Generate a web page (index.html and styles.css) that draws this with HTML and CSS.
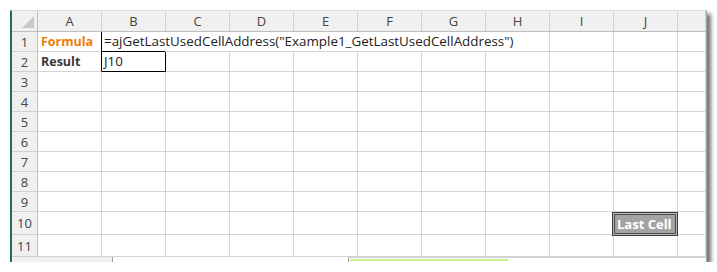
FILE: index.html
```html
<!DOCTYPE html>
<html lang="en">
<head>
    <meta charset="UTF-8">
    <title>GetLastUsedCellAddress</title>
    <link rel="stylesheet" href="styles.css">
</head>
<body>
    <div class="window">
        <div class="sheet">
            <!-- column headers -->
            <div class="corner"><span class="tri"></span></div>
            <div class="colhead">A</div>
            <div class="colhead">B</div>
            <div class="colhead">C</div>
            <div class="colhead">D</div>
            <div class="colhead">E</div>
            <div class="colhead">F</div>
            <div class="colhead">G</div>
            <div class="colhead">H</div>
            <div class="colhead">I</div>
            <div class="colhead">J</div>
            <div class="colhead"></div>

            <!-- row 1 -->
            <div class="rowhead">1</div>
            <div class="cell label orange black-right">Formula</div>
            <div class="cell formula">=ajGetLastUsedCellAddress("Example1_GetLastUsedCellAddress")</div>
            <div class="cell"></div>
            <div class="cell"></div>
            <div class="cell"></div>

            <!-- row 2 -->
            <div class="rowhead">2</div>
            <div class="cell label black-right">Result</div>
            <div class="cell boxed">J10</div>
            <div class="cell"></div><div class="cell"></div><div class="cell"></div>
            <div class="cell"></div><div class="cell"></div><div class="cell"></div>
            <div class="cell"></div><div class="cell"></div><div class="cell"></div>

            <div class="rowhead">3</div>
            <div class="cell"></div><div class="cell"></div><div class="cell"></div><div class="cell"></div><div class="cell"></div>
            <div class="cell"></div><div class="cell"></div><div class="cell"></div><div class="cell"></div><div class="cell"></div><div class="cell"></div>

            <div class="rowhead">4</div>
            <div class="cell"></div><div class="cell"></div><div class="cell"></div><div class="cell"></div><div class="cell"></div>
            <div class="cell"></div><div class="cell"></div><div class="cell"></div><div class="cell"></div><div class="cell"></div><div class="cell"></div>

            <div class="rowhead">5</div>
            <div class="cell"></div><div class="cell"></div><div class="cell"></div><div class="cell"></div><div class="cell"></div>
            <div class="cell"></div><div class="cell"></div><div class="cell"></div><div class="cell"></div><div class="cell"></div><div class="cell"></div>

            <div class="rowhead">6</div>
            <div class="cell"></div><div class="cell"></div><div class="cell"></div><div class="cell"></div><div class="cell"></div>
            <div class="cell"></div><div class="cell"></div><div class="cell"></div><div class="cell"></div><div class="cell"></div><div class="cell"></div>

            <div class="rowhead">7</div>
            <div class="cell"></div><div class="cell"></div><div class="cell"></div><div class="cell"></div><div class="cell"></div>
            <div class="cell"></div><div class="cell"></div><div class="cell"></div><div class="cell"></div><div class="cell"></div><div class="cell"></div>

            <div class="rowhead">8</div>
            <div class="cell"></div><div class="cell"></div><div class="cell"></div><div class="cell"></div><div class="cell"></div>
            <div class="cell"></div><div class="cell"></div><div class="cell"></div><div class="cell"></div><div class="cell"></div><div class="cell"></div>

            <div class="rowhead">9</div>
            <div class="cell"></div><div class="cell"></div><div class="cell"></div><div class="cell"></div><div class="cell"></div>
            <div class="cell"></div><div class="cell"></div><div class="cell"></div><div class="cell"></div><div class="cell"></div><div class="cell"></div>

            <div class="rowhead">10</div>
            <div class="cell"></div><div class="cell"></div><div class="cell"></div><div class="cell"></div><div class="cell"></div>
            <div class="cell"></div><div class="cell"></div><div class="cell"></div><div class="cell"></div><div class="cell"></div><div class="cell"></div>

            <div class="rowhead">11</div>
            <div class="cell"></div><div class="cell"></div><div class="cell"></div><div class="cell"></div><div class="cell"></div>
            <div class="cell"></div><div class="cell"></div><div class="cell"></div><div class="cell"></div><div class="cell"></div><div class="cell"></div>
        </div>

        <!-- sheet tabs / scroll bar strip -->
        <div class="tabbar">
            <div class="tabs"></div>
            <div class="tab-gap"></div>
            <div class="hscroll"><span class="thumb"></span></div>
        </div>

        <!-- shape button lying over J10 -->
        <div class="shape-btn">Last Cell</div>
    </div>
</body>
</html>
```

FILE: styles.css
```css
body {
    margin: 0;
    background: #fff;
    font-family: 'Open Sans', 'Noto Sans', sans-serif;
    color: #222;
}

.window {
    position: relative;
    margin: 10px 0 0 10px;
    width: 694px;
    border-left: 2px solid #217346;
    border-top: 1px solid #dcdcdc;
    border-right: 1px solid #a8a8a8;
    background: #fff;
    box-shadow: 4px 4px 4px rgba(0, 0, 0, 0.55);
}

.sheet {
    display: grid;
    grid-template-columns: 26px repeat(10, 64px) 28px;
    grid-template-rows: 21px repeat(9, 20px) 23px 22px;
}

.sheet > div {
    box-sizing: border-box;
    border-right: 1px solid #d4d4d4;
    border-bottom: 1px solid #d4d4d4;
    min-width: 0;
}

.corner,
.colhead,
.rowhead {
    background: #f0f0f0;
    color: #444;
    font-size: 13px;
    display: flex;
    align-items: center;
    justify-content: center;
}

.sheet > .corner {
    position: relative;
    border-right-color: #bdbdbd;
    border-bottom-color: #bdbdbd;
}

.tri {
    position: absolute;
    right: 3px;
    bottom: 3px;
    width: 0;
    height: 0;
    border-left: 12px solid transparent;
    border-bottom: 12px solid #c8c8c8;
}

.sheet > .colhead {
    border-bottom-color: #bdbdbd;
    border-right-color: #d0d0d0;
}

.sheet > .rowhead {
    border-right-color: #bdbdbd;
    border-bottom-color: #d0d0d0;
}

.cell {
    font-size: 13.4px;
    line-height: 19px;
    padding-left: 2px;
    white-space: nowrap;
}

.label {
    font-weight: bold;
    font-size: 12.5px;
    padding-left: 3px;
    color: #3a3a3a;
}

.orange {
    color: #f07b0a;
}

.sheet > .black-right {
    border-right-color: #000;
}

.formula {
    grid-column: span 7;
    overflow: visible;
}

.sheet > .boxed {
    border-right-color: #000;
    border-bottom-color: #000;
    box-shadow: -1px -1px 0 #000;
}

.tabbar {
    display: flex;
    height: 5px;
}

.tabs {
    width: 100px;
    background: #f0f0f0;
    border-right: 1px solid #a0a0a0;
}

.tab-gap {
    width: 235px;
}

.hscroll {
    flex: 1;
    border-left: 1px solid #a0a0a0;
    border-top: 1px solid #cfcfcf;
    padding: 1px 0 0 1px;
}

.thumb {
    display: block;
    width: 158px;
    height: 2px;
    background: #c8ef90;
}

.shape-btn {
    position: absolute;
    left: 600px;
    top: 201px;
    width: 66px;
    height: 24px;
    box-sizing: border-box;
    border: 1px solid #3a3a3a;
    background: #a3a3a3;
    box-shadow: inset 0 0 0 1px #b8b8b8, inset 0 0 0 2px #4a4a4a;
    color: #fff;
    font-weight: bold;
    font-size: 13px;
    line-height: 22px;
    padding-left: 4px;
}
```
